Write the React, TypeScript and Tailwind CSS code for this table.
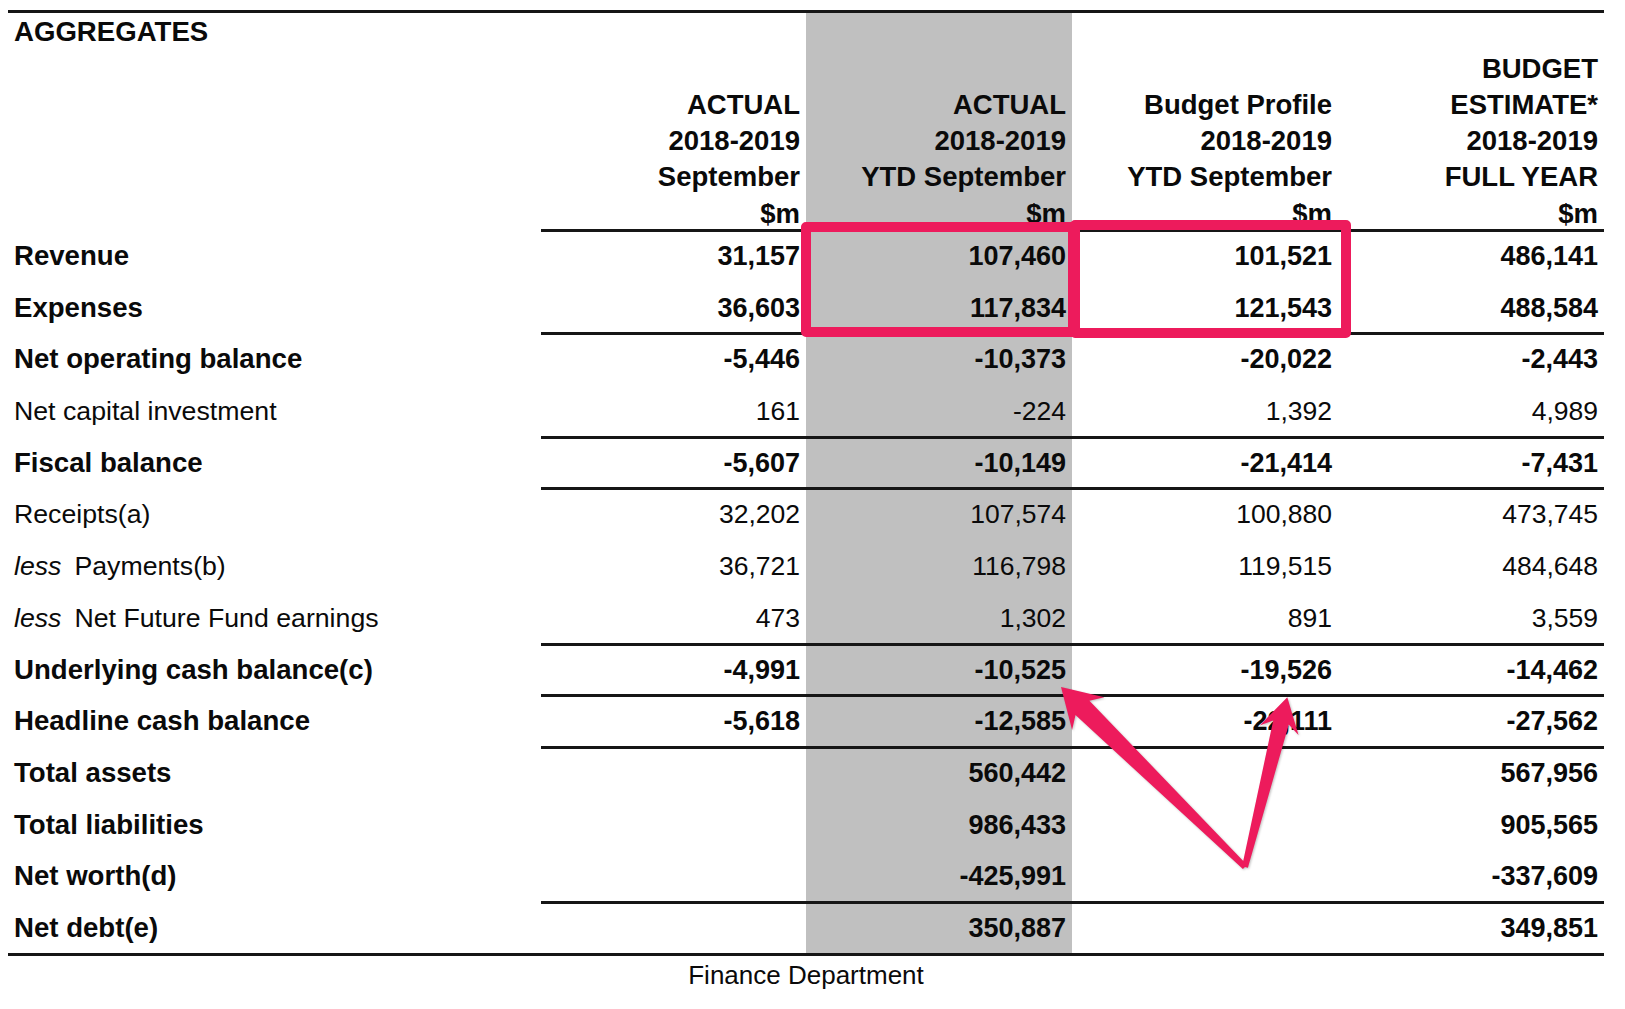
import React from "react";

type Row = {
  label: React.ReactNode;
  bold: boolean;
  v: [string, string, string, string];
  line?: boolean;
  last?: boolean;
};

const rows: Row[] = [
  { label: "Revenue", bold: true, v: ["31,157", "107,460", "101,521", "486,141"] },
  { label: "Expenses", bold: true, v: ["36,603", "117,834", "121,543", "488,584"], line: true },
  { label: "Net operating balance", bold: true, v: ["-5,446", "-10,373", "-20,022", "-2,443"] },
  { label: "Net capital investment", bold: false, v: ["161", "-224", "1,392", "4,989"], line: true },
  { label: "Fiscal balance", bold: true, v: ["-5,607", "-10,149", "-21,414", "-7,431"], line: true },
  { label: "Receipts(a)", bold: false, v: ["32,202", "107,574", "100,880", "473,745"] },
  {
    label: (
      <>
        <i className="mr-[13px]">less</i>Payments(b)
      </>
    ),
    bold: false,
    v: ["36,721", "116,798", "119,515", "484,648"],
  },
  {
    label: (
      <>
        <i className="mr-[13px]">less</i>Net Future Fund earnings
      </>
    ),
    bold: false,
    v: ["473", "1,302", "891", "3,559"],
    line: true,
  },
  { label: "Underlying cash balance(c)", bold: true, v: ["-4,991", "-10,525", "-19,526", "-14,462"], line: true },
  { label: "Headline cash balance", bold: true, v: ["-5,618", "-12,585", "-22,111", "-27,562"], line: true },
  { label: "Total assets", bold: true, v: ["", "560,442", "", "567,956"] },
  { label: "Total liabilities", bold: true, v: ["", "986,433", "", "905,565"] },
  { label: "Net worth(d)", bold: true, v: ["", "-425,991", "", "-337,609"], line: true },
  { label: "Net debt(e)", bold: true, v: ["", "350,887", "", "349,851"], last: true },
];

const headers: string[][] = [
  ["ACTUAL", "2018-2019", "September", "$m"],
  ["ACTUAL", "2018-2019", "YTD September", "$m"],
  ["Budget Profile", "2018-2019", "YTD September", "$m"],
  ["BUDGET", "ESTIMATE*", "2018-2019", "FULL YEAR", "$m"],
];

export default function App() {
  return (
    <div className="relative w-[1625px] h-[1009px] overflow-hidden bg-white text-[#0a0a0a] font-['Liberation_Sans',Arial,sans-serif]">
      <div className="ml-[8px] mt-[10px] w-[1596px] border-t-[3px] border-[#161616] grid grid-cols-[533px_265px_266px_266px_266px]">
        {/* header */}
        <div className="h-[219px] pl-[6px]">
          <div className="text-[27.6px] leading-[38px] font-bold">AGGREGATES</div>
        </div>
        {headers.map((h, i) => (
          <div
            key={i}
            className={
              "h-[219px] flex flex-col justify-end items-end pr-[6px] border-b-[3px] border-[#161616] " +
              (i === 1 ? "bg-[#c0c0c0]" : "")
            }
          >
            <div className="translate-y-[3px] text-right text-[27.5px] leading-[36.3px] font-bold whitespace-nowrap">
              {h.map((t, j) => (
                <div key={j}>{t}</div>
              ))}
            </div>
          </div>
        ))}

        {/* body */}
        {rows.map((r, ri) => (
          <React.Fragment key={ri}>
            <div
              className={
                "h-[51.7px] pl-[6px] pt-[9px] leading-[30px] whitespace-nowrap " +
                (r.bold ? "font-bold text-[27.6px] " : "text-[26.7px] ") +
                (r.last ? "border-b-[3px] border-[#161616]" : "")
              }
            >
              {r.label}
            </div>
            {r.v.map((val, ci) => (
              <div
                key={ci}
                className={
                  "h-[51.7px] pr-[6px] pt-[9px] leading-[30px] text-right " +
                  (r.bold ? "font-bold text-[27px] " : "text-[26.5px] ") +
                  (ci === 1 ? "bg-[#c0c0c0] " : "") +
                  (r.line || r.last ? "border-b-[3px] border-[#161616]" : "")
                }
              >
                {val}
              </div>
            ))}
          </React.Fragment>
        ))}
      </div>

      <div className="ml-[8px] mt-[4px] w-[1596px] text-center text-[26px] leading-[30px]">
        Finance Department
      </div>

      {/* annotation boxes */}
      <div className="absolute left-[801px] top-[222px] w-[277px] h-[115px] border-[10px] border-[#ed1b5c] rounded-[5px]" />
      <div className="absolute left-[1070px] top-[220px] w-[281px] h-[118px] border-[10px] border-[#ed1b5c] rounded-[5px]" />

      {/* arrows */}
      <svg
        className="absolute left-0 top-0 pointer-events-none drop-shadow-[1px_1px_1px_rgba(0,0,0,0.25)]"
        width="1625"
        height="1009"
        viewBox="0 0 1625 1009"
      >
        <polygon
          fill="#ed1b5c"
          points="1061,687 1104.3,697.2 1089.4,700.8 1247.1,864.9 1242.9,869.1 1075.5,715.1 1072.1,730"
        />
        <polygon
          fill="#ed1b5c"
          points="1287.3,697.3 1298.5,735.1 1288.8,724.4 1247.9,867.7 1242.1,866.3 1273.2,720.6 1259.7,725.5"
        />
      </svg>
    </div>
  );
}
